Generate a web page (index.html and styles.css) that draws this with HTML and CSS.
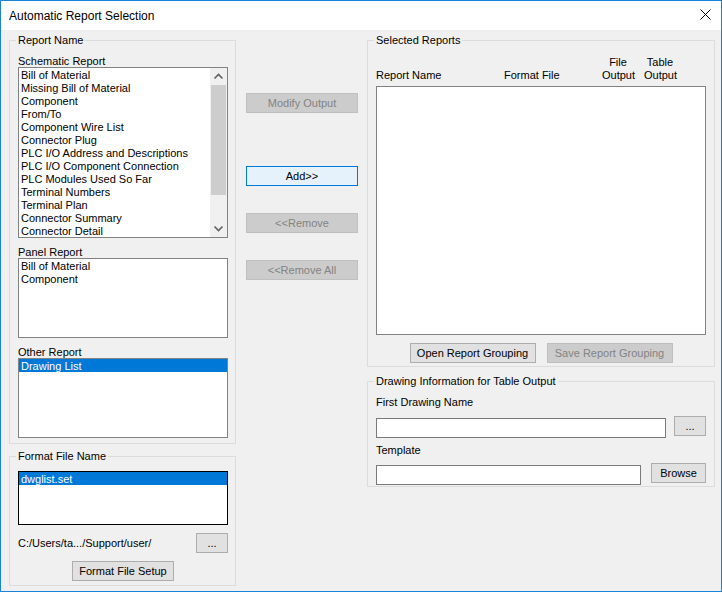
FILE: index.html
```html
<!DOCTYPE html>
<html>
<head>
<meta charset="utf-8">
<link rel="stylesheet" href="styles.css">
</head>
<body>
<div class="window">
  <div class="titlebar">
    <span class="title">Automatic Report Selection</span>
    <svg class="close" width="11" height="11" viewBox="0 0 11 11"><path d="M0.5 0.5 L10.5 10.5 M10.5 0.5 L0.5 10.5" stroke="#000" stroke-width="1" fill="none"/></svg>
  </div>
  <div class="client">
    <div class="col-left">
      <div class="group g-report">
        <div class="group-title">Report Name</div>
        <div class="label first">Schematic Report</div>
        <div class="listbox lb-schematic">
          <div class="items">
            <div class="item">Bill of Material</div>
            <div class="item">Missing Bill of Material</div>
            <div class="item">Component</div>
            <div class="item">From/To</div>
            <div class="item">Component Wire List</div>
            <div class="item">Connector Plug</div>
            <div class="item">PLC I/O Address and Descriptions</div>
            <div class="item">PLC I/O Component Connection</div>
            <div class="item">PLC Modules Used So Far</div>
            <div class="item">Terminal Numbers</div>
            <div class="item">Terminal Plan</div>
            <div class="item">Connector Summary</div>
            <div class="item">Connector Detail</div>
          </div>
          <div class="scrollbar">
            <div class="sb-btn"><svg width="17" height="17" viewBox="0 0 17 17"><polyline points="4.5,10.5 8.5,6.5 12.5,10.5" fill="none" stroke="#606060" stroke-width="1.6"/></svg></div>
            <div class="sb-track"><div class="sb-thumb"></div></div>
            <div class="sb-btn"><svg width="17" height="17" viewBox="0 0 17 17"><polyline points="4.5,6.5 8.5,10.5 12.5,6.5" fill="none" stroke="#606060" stroke-width="1.6"/></svg></div>
          </div>
        </div>
        <div class="label">Panel Report</div>
        <div class="listbox lb-small">
          <div class="item">Bill of Material</div>
          <div class="item">Component</div>
        </div>
        <div class="label">Other Report</div>
        <div class="listbox lb-small">
          <div class="item sel">Drawing List</div>
        </div>
      </div>
      <div class="group g-format">
        <div class="group-title">Format File Name</div>
        <div class="listbox lb-format">
          <div class="item sel">dwglist.set</div>
        </div>
        <div class="path-row">
          <span class="path">C:/Users/ta.../Support/user/</span>
          <button class="btn btn-dots">...</button>
        </div>
        <button class="btn btn-setup">Format File Setup</button>
      </div>
    </div>
    <div class="col-mid">
      <button class="btn disabled">Modify Output</button>
      <button class="btn default btn-add">Add&gt;&gt;</button>
      <button class="btn disabled btn-rm">&lt;&lt;Remove</button>
      <button class="btn disabled btn-rm">&lt;&lt;Remove All</button>
    </div>
    <div class="col-right">
      <div class="group g-selected">
        <div class="group-title">Selected Reports</div>
        <div class="hdr">
          <div class="h1">Report Name</div>
          <div class="h2">Format File</div>
          <div class="h3">File<br>Output</div>
          <div class="h4">Table<br>Output</div>
        </div>
        <div class="listbox lb-selected"></div>
        <div class="grp-btns">
          <button class="btn btn-grp">Open Report Grouping</button>
          <button class="btn btn-grp disabled">Save Report Grouping</button>
        </div>
      </div>
      <div class="group g-drawing">
        <div class="group-title">Drawing Information for Table Output</div>
        <div class="label2">First Drawing Name</div>
        <div class="field-row">
          <div class="input in-first"></div>
          <button class="btn btn-dots2">...</button>
        </div>
        <div class="label2 label-tpl">Template</div>
        <div class="field-row row-tpl">
          <div class="input in-tpl"></div>
          <button class="btn btn-browse">Browse</button>
        </div>
      </div>
    </div>
  </div>
</div>
</body>
</html>
```

FILE: styles.css
```css
* { box-sizing: border-box; }
html, body { margin: 0; padding: 0; }
body {
  width: 722px;
  height: 592px;
  font-family: "Liberation Sans", Arial, sans-serif;
  font-size: 11px;
  color: #000;
  background: #fff;
  overflow: hidden;
}
.window {
  width: 722px;
  height: 592px;
  border: 1px solid #1883d7;
  display: flex;
  flex-direction: column;
  background: #f0f0f0;
}
.titlebar {
  height: 29px;
  flex: none;
  background: #fff;
  display: flex;
  align-items: center;
  justify-content: space-between;
  padding: 0 10px 0 8px;
}
.title {
  font-size: 12px;
  line-height: 16px;
}
.close { margin-top: -2px; }
.client {
  flex: 1;
  display: flex;
  padding: 10px 6px 0 8px;
}
.col-left { width: 227px; display: flex; flex-direction: column; }
.col-mid { width: 112px; margin-left: 10px; padding-top: 53px; display: flex; flex-direction: column; }
.col-right { width: 348px; margin-left: 9px; display: flex; flex-direction: column; }

.group {
  border: 1px solid #dcdcdc;
  padding: 0 7px 5px 8px;
  display: flex;
  flex-direction: column;
}
.group-title {
  width: max-content;
  margin: -7px 0 0 -2px;
  padding: 0 2px;
  line-height: 13px;
  background: #f0f0f0;
}
.label { line-height: 12px; margin-top: 8px; }

.listbox {
  border: 1px solid #828282;
  background: #fff;
  overflow: hidden;
}
.item {
  height: 13px;
  line-height: 15px;
  padding-left: 2px;
  white-space: nowrap;
}
.item.sel { background: #0078d7; color: #fff; }

.lb-schematic { height: 171px; display: flex; }
.lb-schematic .items { flex: 1; overflow: hidden; }
.scrollbar {
  width: 17px;
  display: flex;
  flex-direction: column;
  background: #f0f0f0;
}
.sb-btn { height: 17px; flex: none; }
.sb-btn svg { display: block; }
.sb-track { flex: 1; padding: 0 1px; }
.sb-thumb { height: 110px; background: #cdcdcd; }

.lb-small { height: 80px; }

.g-format { margin-top: 12px; padding-bottom: 4px; }
.lb-format { height: 54px; margin-top: 8px; border-color: #000; }
.path-row {
  margin-top: 8px;
  display: flex;
  align-items: center;
  justify-content: space-between;
}
.path { line-height: 13px; }

.btn {
  height: 20px;
  margin: 0;
  padding: 0;
  border: 1px solid #adadad;
  background: #e1e1e1;
  font-family: "Liberation Sans", Arial, sans-serif;
  font-size: 11px;
  line-height: 18px;
  color: #000;
  text-align: center;
  white-space: nowrap;
}
.btn.disabled { background: #cccccc; border-color: #bfbfbf; color: #838383; }
.btn.default { background: #e5f1fb; border-color: #0078d7; }
.btn-dots { width: 32px; }
.btn-setup { width: 102px; margin-top: 8px; align-self: center; }
.col-mid .btn { width: 112px; }
.btn-add { margin-top: 53px; }
.btn-rm { margin-top: 27px; }

.g-selected { padding: 0 8px 3px 8px; }
.hdr {
  margin-top: 9px;
  height: 26px;
  display: flex;
  align-items: flex-end;
  line-height: 13px;
}
.h1 { width: 128px; }
.h2 { width: 98px; }
.h3, .h4 { width: 32px; text-align: center; white-space: nowrap; }
.h3 { margin-right: 10px; }
.lb-selected { height: 249px; margin-top: 4px; }
.grp-btns {
  margin-top: 8px;
  display: flex;
  justify-content: center;
  gap: 11px;
}
.btn-grp { width: 126px; }

.g-drawing { margin-top: 14px; padding: 0 8px 1px 8px; }
.label2 { line-height: 13px; margin-top: 8px; }
.label-tpl { margin-top: 6px; }
.field-row { display: flex; align-items: flex-start; margin-top: 7px; }
.row-tpl { margin-top: 6px; }
.input {
  height: 20px;
  margin-top: 2px;
  border: 1px solid #7a7a7a;
  background: #fff;
}
.in-first { width: 290px; }
.btn-dots2 { width: 32px; margin-left: 8px; }
.in-tpl { width: 265px; }
.btn-browse { width: 55px; margin-left: 10px; }
```
